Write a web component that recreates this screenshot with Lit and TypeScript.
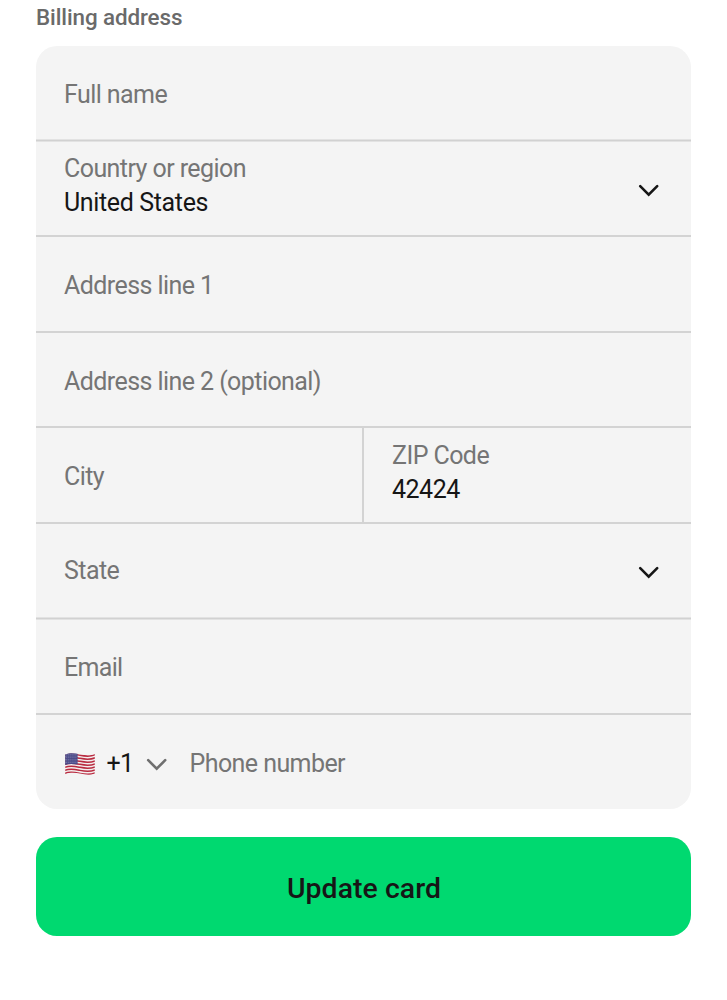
import { LitElement, html, css, svg } from "lit";
import { customElement, property } from "lit/decorators.js";

@customElement("chevron-icon")
class ChevronIcon extends LitElement {
  static styles = css`
    :host { display: block; width: 24px; height: 16px; }
    svg { display: block; }
  `;
  render() {
    return html`<svg width="24" height="16" viewBox="0 0 24 16" fill="none" stroke="currentColor" stroke-width="2.6" stroke-linecap="round" stroke-linejoin="miter">
      <path d="M3.2 4.2 L11.7 12.7 L20.2 4.2" />
    </svg>`;
  }
}

@customElement("flag-us")
class FlagUs extends LitElement {
  static styles = css`
    :host { display: block; width: 30px; height: 22px; }
    svg { display: block; }
  `;
  render() {
    const step = 19.6 / 13;
    const wave = (y: number) => `M0 ${y} C5 ${y - 2.2} 10 ${y - 1} 15 ${y} S25 ${y + 1.6} 30 ${y - 0.5}`;
    const stripes = Array.from({ length: 13 }, (_, i) => i);
    const stars: [number, number][] = [];
    for (let r = 0; r < 6; r++) for (let c = 0; c < 6; c++) stars.push([1.2 + c * 1.95, 1.3 + r * 1.65]);
    return html`<svg width="30" height="22" viewBox="0 0 30 22">
      <defs><clipPath id="cloth"><path d="M0.2 1.6 C5 -0.6 10 0.4 15 1.3 S25 2.8 29.8 0.9 V20.5 C25 22.6 20 21.5 15 20.6 S5 19.2 0.2 21.4 Z" /></clipPath></defs>
      <g clip-path="url(#cloth)">
        <rect width="30" height="22" fill="#f4eeee" />
        ${stripes.map((i) => i % 2 ? null : svg`<path d=${wave(2.3 + i * step)} fill="none" stroke="#b92b40" stroke-width=${step} />`)}
        <path d="M0 0 H12.6 V11.6 C8 10.8 4 10.6 0 11.9 Z" fill="#4a4a88" />
        ${stars.map(([x, y]) => svg`<circle cx=${x} cy=${y} r="0.45" fill="#a9a9ca" />`)}
      </g>
    </svg>`;
  }
}

@customElement("form-field")
class FormField extends LitElement {
  @property() label = "";
  @property() value = "";
  static styles = css`
    :host { display: block; box-sizing: border-box; padding-left: 28px; line-height: 34px; white-space: nowrap; }
    .label { color: #757575; line-height: var(--label-line, 34px); }
    .value { color: #161616; letter-spacing: var(--value-spacing, -0.45px); }
  `;
  render() {
    return html`<div class="label">${this.label}</div>
      ${this.value ? html`<div class="value">${this.value}</div>` : null}`;
  }
}

@customElement("app-root")
class AppRoot extends LitElement {
  static styles = css`
    :host {
      display: block; box-sizing: border-box; height: 1000px; padding: 4px 36px 0;
      background: #fff; font-family: Roboto, "Liberation Sans", sans-serif;
      font-size: 25px; letter-spacing: -0.57px; color: #161616; overflow: hidden;
    }
    .title { height: 42px; line-height: 26px; font-size: 22.4px; font-weight: 500; letter-spacing: -0.09px; color: #6a6a6a; }
    .card {
      display: grid; height: 763px; width: 655px; border-radius: 21px; overflow: hidden; background: #f4f4f4;
      grid-template-rows: 93px 3px 93px 2px 94px 2px 93px 2px 94px 2px 93px 3px 93px 2px 94px;
    }
    .line { background: #d3d3d3; }
    .soft { background: linear-gradient(#e2e2e2 33.3%, #d1d1d1 33.3% 66.6%, #e2e2e2 66.6%); }
    .field { padding-top: 32px; }
    .select { display: flex; }
    .select .field { flex: 1; }
    .country { padding-top: 10px; --value-spacing: -0.36px; }
    .state { padding-top: 30px; }
    .email { padding-top: 31px; letter-spacing: -0.7px; }
    .arrow { margin: 40px 30px 0 0; }
    .split { display: grid; grid-template-columns: 326px 2px 1fr; }
    .city { padding-top: 32px; }
    .zip { padding-top: 11px; --value-spacing: -0.5px; }
    .phone { display: flex; padding: 32px 0 0 28px; line-height: 34px; }
    .flag { margin: 6px 0 0 0.5px; }
    .code { width: 40px; margin-left: 12px; }
    .code-arrow { margin-top: 9px; margin-left: -1.5px; color: #6f6f6f; }
    .hint { margin-left: 20.5px; color: #757575; }
    .submit {
      display: block; width: 655px; height: 99px; margin: 28px 0 0; padding: 4px 0 0 1px; border: 0; border-radius: 21px;
      background: #00d970; color: #161616; font: 500 28.4px/34px Roboto, "Liberation Sans", sans-serif; letter-spacing: 0.06px;
    }
  `;
  render() {
    return html`
      <div class="title">Billing address</div>
      <div class="card">
        <form-field class="field" label="Full name"></form-field>
        <div class="line soft"></div>
        <div class="select">
          <form-field class="field country" label="Country or region" value="United States"></form-field>
          <chevron-icon class="arrow"></chevron-icon>
        </div>
        <div class="line"></div>
        <form-field class="field" label="Address line 1"></form-field>
        <div class="line"></div>
        <form-field class="field" label="Address line 2 (optional)"></form-field>
        <div class="line"></div>
        <div class="split">
          <form-field class="city" label="City"></form-field>
          <div class="line"></div>
          <form-field class="zip" label="ZIP Code" value="42424"></form-field>
        </div>
        <div class="line"></div>
        <div class="select">
          <form-field class="field state" label="State"></form-field>
          <chevron-icon class="arrow"></chevron-icon>
        </div>
        <div class="line soft"></div>
        <form-field class="field email" label="Email"></form-field>
        <div class="line"></div>
        <div class="phone">
          <flag-us class="flag"></flag-us>
          <span class="code">+1</span>
          <chevron-icon class="code-arrow"></chevron-icon>
          <span class="hint">Phone number</span>
        </div>
      </div>
      <button class="submit">Update card</button>
    `;
  }
}
